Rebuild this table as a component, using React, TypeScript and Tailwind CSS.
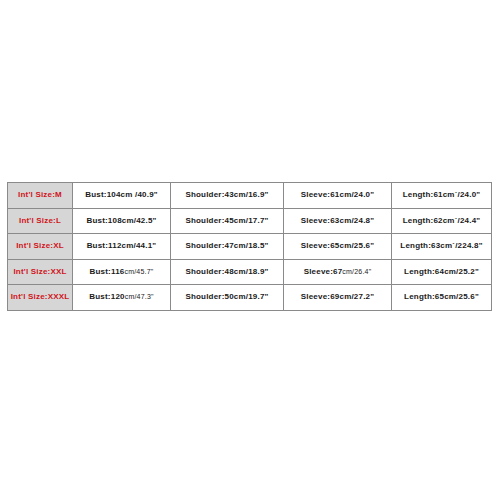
const rows: { size: string; cells: [string, string?][] }[] = [
  {
    size: "Int'l Size:M",
    cells: [
      ["Bust:104cm /40.9\""],
      ["Shoulder:43cm/16.9\""],
      ["Sleeve:61cm/24.0\""],
      ["Length:61cm`/24.0\""],
    ],
  },
  {
    size: "Int'l Size:L",
    cells: [
      ["Bust:108cm/42.5\""],
      ["Shoulder:45cm/17.7\""],
      ["Sleeve:63cm/24.8\""],
      ["Length:62cm`/24.4\""],
    ],
  },
  {
    size: "Int'l Size:XL",
    cells: [
      ["Bust:112cm/44.1\""],
      ["Shoulder:47cm/18.5\""],
      ["Sleeve:65cm/25.6\""],
      ["Length:63cm`/224.8\""],
    ],
  },
  {
    size: "Int'l Size:XXL",
    cells: [
      ["Bust:116", "cm/45.7\""],
      ["Shoulder:48cm/18.9\""],
      ["Sleeve:67", "cm/26.4\""],
      ["Length:64cm/25.2\""],
    ],
  },
  {
    size: "Int'l Size:XXXL",
    cells: [
      ["Bust:120", "cm/47.3\""],
      ["Shoulder:50cm/19.7\""],
      ["Sleeve:69cm/27.2\""],
      ["Length:65cm/25.6\""],
    ],
  },
];

const widths = ["w-[98px]", "w-[113px]", "w-[108px]", "w-[100px]"];

export default function App() {
  return (
    <div className="w-[500px] h-[500px] bg-white pt-[182px] pl-[7px] font-['Liberation_Sans',Arial,sans-serif]">
      <table className="border-collapse border border-[#8a8a8a] text-[8px] leading-none tracking-[0.2px]">
        <tbody>
          {rows.map((row) => (
            <tr key={row.size} className="h-[25.5px]">
              <td className="w-[65px] border border-[#8a8a8a] bg-[#d6d6d6] text-center font-bold text-[#d0141a]">
                {row.size}
              </td>
              {row.cells.map(([bold, thin], i) => (
                <td
                  key={i}
                  className={`${widths[i]} border border-[#8a8a8a] text-center font-bold text-[#1a1a1a]`}
                >
                  {bold}
                  {thin && <span className="font-normal text-[7px]">{thin}</span>}
                </td>
              ))}
            </tr>
          ))}
        </tbody>
      </table>
    </div>
  );
}
